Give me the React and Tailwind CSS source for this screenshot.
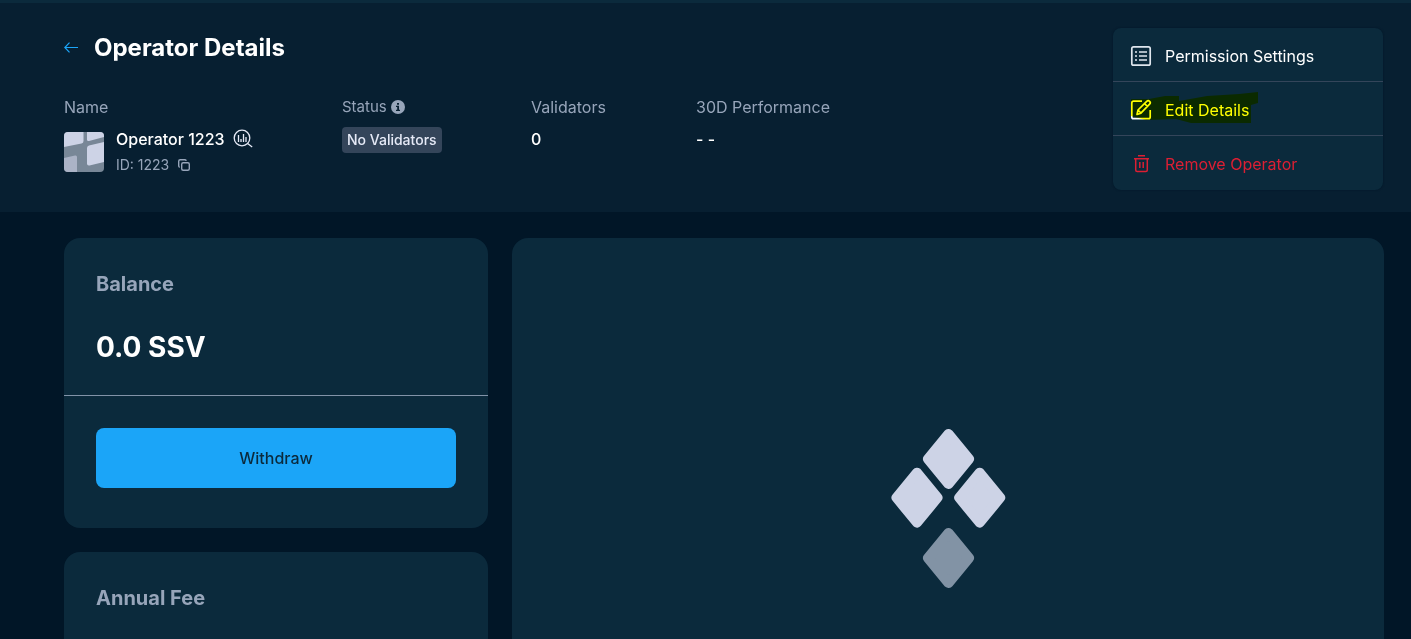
const label = "text-base leading-6 text-[#97a5ba]";

function MenuItem({ icon, children, color = "text-white" }) {
  return (
    <button type="button" className={"relative flex h-[54px] w-full items-center gap-3 px-4 pt-0.5 text-left text-base leading-6 " + color}>
      {icon}
      {children}
    </button>
  );
}

function ListIcon() {
  return (
    <svg className="size-6 shrink-0" viewBox="0 0 24 24" fill="none" stroke="#dfe6ee" strokeWidth="1.7">
      <rect x="2.8" y="2.8" width="18.4" height="18.4" rx="1.8" />
      <path d="M10 8h8M10 12h8M10 16h8" />
      <path d="M6 8h2M6 12h2M6 16h2" />
    </svg>
  );
}

function EditIcon() {
  return (
    <svg className="size-6 shrink-0" viewBox="0 0 24 24" fill="none" stroke="#fff" strokeWidth="1.7" strokeLinejoin="round">
      <path d="M13 3.2H4.5a1.7 1.7 0 0 0-1.7 1.7V19a1.7 1.7 0 0 0 1.7 1.7h15a1.7 1.7 0 0 0 1.700-1.700V12" />
      <path d="M8 16.500l1-4.500 8.700-8.700a2 2 0 0 1 2.900 2.900l-8.700 9L8 16.500zM15.500 5.500l2.900 2.900M9 12l2.900 3" />
    </svg>
  );
}

function TrashIcon() {
  return (
    <svg className="size-6 shrink-0" viewBox="0 0 24 24" fill="none" stroke="#dc1f33" strokeWidth="1.5">
      <path d="M9 3.700h7M5 6.700h15M6.700 6.700v11.300a1.500 1.500 0 0 0 1.500 1.500h8.600a1.500 1.500 0 0 0 1.500-1.500V6.700M10.800 10v6M14.200 10v6" />
    </svg>
  );
}

function OperatorLogo() {
  return (
    <svg className="size-10 shrink-0 rounded-[4px]" viewBox="0 0 40 40">
      <rect width="40" height="40" fill="#788797" />
      <path d="M0 0h19.500v9q0 2-2 2.500L0 15zM23 0h17v5l-15 4q-2 .5-2-1.500z" fill="#cdd3e6" />
      <path d="M40 10v20l-14.500 3.500q-2.500.5-2.500-2V16q0-2 2-2.500z" fill="#cdd3e6" />
      <path d="M0 26l11-2.500q2-.5 2 1.500V40H0z" fill="#abb3c6" />
    </svg>
  );
}

export default function App() {
  return (
    <div className="min-h-screen border-t-[3px] border-[#0b2a3c] bg-[#011627] font-['Inter',sans-serif] text-white">
      <header className="flex items-start justify-between bg-[#071f31] pt-[25px] pr-7 pb-[22px] pl-16">
        <div>
          <div className="flex h-10 items-center gap-4">
            <a href="#operators" aria-label="Back">
              <svg className="h-4 w-3.5" viewBox="0 0 14 16" fill="none" stroke="#1ba5f8" strokeWidth="1.2">
                <path d="M14 7.500H.8M5.500 2.700L.8 7.500l4.700 4.800" />
              </svg>
            </a>
            <h1 className="text-2xl leading-8 font-bold">Operator Details</h1>
          </div>
          <div className="mt-[27px] grid grid-cols-[188px_99px_75px_auto] gap-x-[90px]">
            <div>
              <div className={label}>Name</div>
              <div className="mt-2 flex items-center gap-3">
                <OperatorLogo />
                <div>
                  <div className="flex items-center gap-2 text-base leading-6 font-medium whitespace-nowrap">
                    Operator 1223
                    <svg className="size-5 shrink-0" viewBox="0 0 20 20" fill="none" stroke="#e6eaf7" strokeWidth="1.3">
                      <circle cx="9" cy="9" r="7.8" />
                      <path d="M14.600 14.500l4.600 3.500M5.500 6v7M8 10v3M10.500 5v8M13 8v5" />
                    </svg>
                  </div>
                  <div className="mt-0.5 flex items-center gap-2 text-sm leading-6 text-[#97a5ba]">
                    ID: 1223
                    <svg className="size-3.5" viewBox="0 0 14 14" fill="none" stroke="#97a5ba" strokeWidth="1.4">
                      <rect x="4.7" y="4.7" width="7.6" height="7.6" rx="1.5" />
                      <path d="M2.800 9.300A1.500 1.500 0 0 1 1.700 8V3.200a1.500 1.500 0 0 1 1.500-1.500H8a1.500 1.500 0 0 1 1.300 1.100" />
                    </svg>
                  </div>
                </div>
              </div>
            </div>
            <div>
              <div className="flex items-center gap-1 text-[15px] leading-6 text-[#97a5ba]">
                Status
                <svg className="size-3.5" viewBox="0 0 14 14">
                  <circle cx="7" cy="7" r="7" fill="#97a5ba" />
                  <path d="M6 3h2v1.700H6zM5 5.800h3v4h1V11H5V9.800h1.200V7H5z" fill="#071f31" />
                </svg>
              </div>
              <div className="mt-2 inline-block rounded-[4px] bg-[#34455a] px-[5px] py-px text-sm leading-6 font-medium whitespace-nowrap text-[#e6eaf7]">No Validators</div>
            </div>
            <div>
              <div className={label}>Validators</div>
              <div className="mt-2 text-base leading-6 font-medium">0</div>
            </div>
            <div>
              <div className={label}>30D Performance</div>
              <div className="mt-2 text-base leading-6 font-medium">- -</div>
            </div>
          </div>
        </div>
        <nav className="w-[270px] divide-y divide-[#34455a] rounded-lg bg-[#0b2a3c] shadow-[0_0_2px_#011627]">
          <MenuItem icon={<ListIcon />}>Permission Settings</MenuItem>
          <MenuItem icon={<EditIcon />}>
            Edit Details
            <svg className="absolute top-2 left-4 h-10 w-[130px] mix-blend-multiply" viewBox="0 0 130 40" aria-hidden="true">
              <path d="M2 9L20 9 36 6h14v5l28-5 32-2 19-2v11l-7 2v18H62l-15-4-30 1-15-4z" fill="#ffff00" />
            </svg>
          </MenuItem>
          <MenuItem icon={<TrashIcon />} color="text-[#dc1f33]">Remove Operator</MenuItem>
        </nav>
      </header>
      <main className="flex gap-6 pt-[26px] pr-[27px] pl-16">
        <div className="flex w-[424px] shrink-0 flex-col gap-6">
          <section className="rounded-2xl bg-[#0b2a3c]">
            <div className="border-b border-[#8293a8] px-8 pt-8 pb-[27px]">
              <h2 className="text-xl leading-7 font-bold text-[#97a5ba]">Balance</h2>
              <p className="mt-7 text-[28px] leading-[42px] font-bold">0.0 SSV</p>
            </div>
            <div className="px-8 pt-8 pb-10">
              <button type="button" className="h-[60px] w-full rounded-lg bg-[#1ba5f8] text-base font-medium text-[#0b2a3c]">Withdraw</button>
            </div>
          </section>
          <section className="rounded-t-2xl bg-[#0b2a3c] px-8 pt-8 pb-7">
            <h2 className="text-xl leading-7 font-bold text-[#97a5ba]">Annual Fee</h2>
          </section>
        </div>
        <section className="flex flex-1 justify-center rounded-t-2xl bg-[#0b2a3c] pt-[189px]">
          <svg className="h-[162px] w-[116px]" viewBox="0 0 116 162">
            <g fill="#cdd3e6" stroke="#cdd3e6" strokeWidth="10" strokeLinejoin="round">
              <path d="M58.500 7L79 32 58.500 57 38 32z" />
              <path d="M27 45.700L47.500 70.700 27 95.700 6.500 70.700z" />
              <path d="M89.700 45.700L110.200 70.700 89.700 95.700 69.200 70.700z" />
            </g>
            <path d="M58.500 106L79 131 58.500 156 38 131z" fill="#8293a5" stroke="#8293a5" strokeWidth="10" strokeLinejoin="round" />
          </svg>
        </section>
      </main>
    </div>
  );
}
